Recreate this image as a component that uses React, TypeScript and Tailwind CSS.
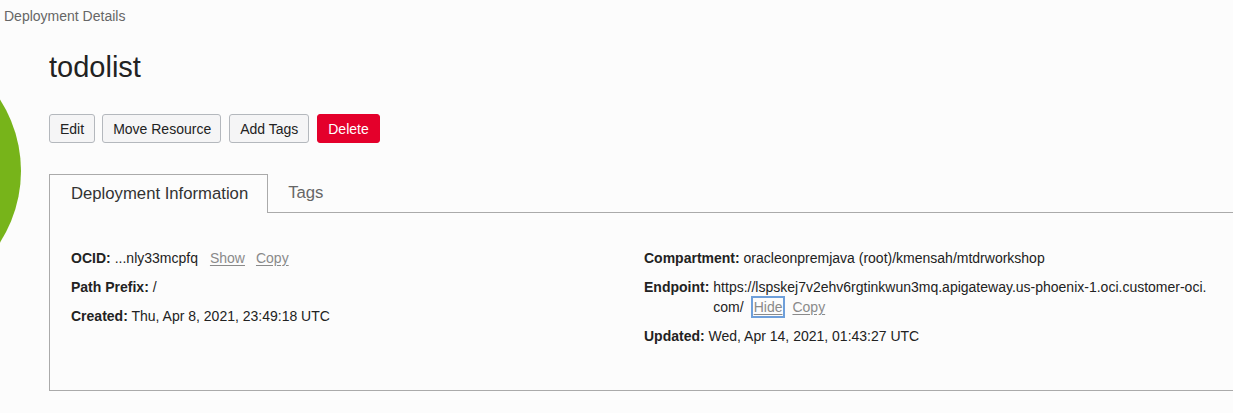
import React from "react";

const font = { fontFamily: '"Liberation Sans", Arial, Helvetica, sans-serif' };

function Btn({ children, danger, className = "" }: { children: React.ReactNode; danger?: boolean; className?: string }) {
  return (
    <button
      className={
        (danger
          ? "h-[29px] px-[10px] whitespace-nowrap rounded-[3px] border border-[#e4002b] bg-[#e4002b] text-white text-[14px] leading-none "
          : "h-[29px] px-[10px] whitespace-nowrap rounded-[3px] border border-[#b4b8bd] bg-[#f5f5f6] text-[#222] text-[14px] leading-none ") + className
      }
    >
      {children}
    </button>
  );
}

function Link({ children, focus }: { children: React.ReactNode; focus?: boolean }) {
  return (
    <span
      className={
        focus
          ? "inline-block leading-[18px] text-[#8a8a8a] underline underline-offset-2 outline-2 outline-solid outline-[#6e9fda] px-[1px]"
          : "text-[#8a8a8a] underline underline-offset-2"
      }
    >
      {children}
    </span>
  );
}

export default function App() {
  return (
    <div
      className="relative w-[1233px] h-[413px] overflow-hidden bg-[#fcfcfc] text-[#222]"
      style={font}
    >
      <div className="absolute left-[-243px] top-[39px] w-[264px] h-[264px] rounded-full bg-[#77b41a]" />
      <div className="relative">
        <div className="pl-[4px] pt-[6px] text-[14px] leading-[20px] text-[#666]">Deployment Details</div>
        <div className="pl-[49px]">
          <h1 className="mt-[23px] text-[29px] leading-[36px] text-[#222]">todolist</h1>
          <div className="mt-[29px] flex">
            <Btn>Edit</Btn>
            <Btn className="ml-[7px] w-[119px]">Move Resource</Btn>
            <Btn className="ml-[8px]">Add Tags</Btn>
            <Btn danger className="ml-[8px]">Delete</Btn>
          </div>
          <div className="mt-[31px] w-[1200px]">
            <div className="flex">
              <div className="h-[39px] pl-[21px] pr-[19px] border-t border-l border-r border-[#aaaaaa] flex items-center text-[16.7px] text-[#333] bg-[#fcfcfc]">
                Deployment Information
              </div>
              <div className="flex-1 h-[39px] border-b border-[#aaaaaa] flex items-center pl-[20px] text-[16.7px] text-[#666]">
                Tags
              </div>
            </div>
            <div className="h-[178px] border-l border-b border-[#aaaaaa] pl-[21px] pt-[35px] flex text-[14px] leading-[20px]">
              <div className="w-[573px] flex flex-col gap-[9px]">
                <div className="flex">
                  <span className="font-bold">OCID:</span>
                  <span className="ml-[4px]">...nly33mcpfq</span>
                  <span className="ml-[12px]"><Link>Show</Link></span>
                  <span className="ml-[11px]"><Link>Copy</Link></span>
                </div>
                <div>
                  <span className="font-bold">Path Prefix:</span> /
                </div>
                <div>
                  <span className="font-bold">Created:</span> Thu, Apr 8, 2021, 23:49:18 UTC
                </div>
              </div>
              <div className="w-[590px] flex flex-col gap-[9px]">
                <div>
                  <span className="font-bold">Compartment:</span> oracleonpremjava (root)/kmensah/mtdrworkshop
                </div>
                <div className="flex">
                  <span className="font-bold shrink-0">Endpoint:</span>
                  <div className="ml-[4px] flex flex-col">
                    <span className="whitespace-nowrap">https://lspskej7v2ehv6rgtinkwun3mq.apigateway.us-phoenix-1.oci.customer-oci.</span>
                    <div className="flex items-center h-[20px]">
                      <span>com/</span>
                      <span className="ml-[9px]"><Link focus>Hide</Link></span>
                      <span className="ml-[9px]"><Link>Copy</Link></span>
                    </div>
                  </div>
                </div>
                <div>
                  <span className="font-bold">Updated:</span> Wed, Apr 14, 2021, 01:43:27 UTC
                </div>
              </div>
            </div>
          </div>
        </div>
      </div>
    </div>
  );
}
